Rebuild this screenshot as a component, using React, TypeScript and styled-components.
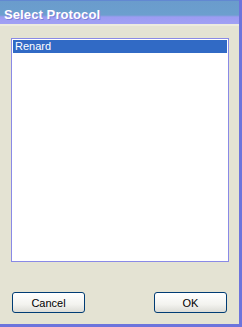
import styled, { createGlobalStyle } from 'styled-components'

const Global = createGlobalStyle`
  html, body {
    margin: 0;
    padding: 0;
    background: #e4e3d3;
  }
`

const Window = styled.div`
  width: 242px;
  height: 327px;
  box-sizing: border-box;
  display: flex;
  flex-direction: column;
  background: #e4e3d3;
  border-right: 3px solid #6c74dc;
  border-bottom: 3px solid #6c74dc;
  font-family: Tahoma, "Liberation Sans", Arial, sans-serif;
`

const TitleBar = styled.div`
  height: 26px;
  box-sizing: border-box;
  display: flex;
  align-items: center;
  padding: 2px 0 0 4px;
  background: linear-gradient(
    to bottom,
    #5a74d6 0px,
    #6a9ccc 1px,
    #6c9fce 15px,
    #9c9cf2 17px,
    #a0a0f4 24px,
    #ecebdf 24px
  );
  color: #fff;
  font-weight: bold;
  font-size: 13px;
  letter-spacing: 0.1px;
  text-shadow: 1px 1px 0 #8080d8;
`

const Body = styled.div`
  flex: 1;
  display: flex;
  flex-direction: column;
  padding: 12px 10px 0 11px;
`

const List = styled.div`
  height: 224px;
  box-sizing: border-box;
  background: #fff;
  border: 1px solid #8a8ae6;
  padding: 1px;
`

const Item = styled.div<{ $selected?: boolean }>`
  height: 13px;
  line-height: 13px;
  padding-left: 2px;
  font-size: 11px;
  background: ${p => (p.$selected ? '#316ac5' : 'transparent')};
  color: ${p => (p.$selected ? '#fff' : '#000')};
`

const ButtonRow = styled.div`
  display: flex;
  justify-content: space-between;
  margin-top: 30px;
  padding: 0 2px 0 1px;
`

const Button = styled.button`
  width: 73px;
  height: 21px;
  box-sizing: border-box;
  border: 1px solid #003c74;
  border-radius: 3px;
  background: linear-gradient(to bottom, #ffffff 0%, #f3f3ef 60%, #dcdcd6 100%);
  font-family: Tahoma, "Liberation Sans", Arial, sans-serif;
  font-size: 11px;
  color: #000;
  padding: 0;
`

export default function App() {
  return (
    <>
      <Global />
      <Window>
        <TitleBar>Select Protocol</TitleBar>
        <Body>
          <List>
            <Item $selected>Renard</Item>
          </List>
          <ButtonRow>
            <Button>Cancel</Button>
            <Button>OK</Button>
          </ButtonRow>
        </Body>
      </Window>
    </>
  )
}
